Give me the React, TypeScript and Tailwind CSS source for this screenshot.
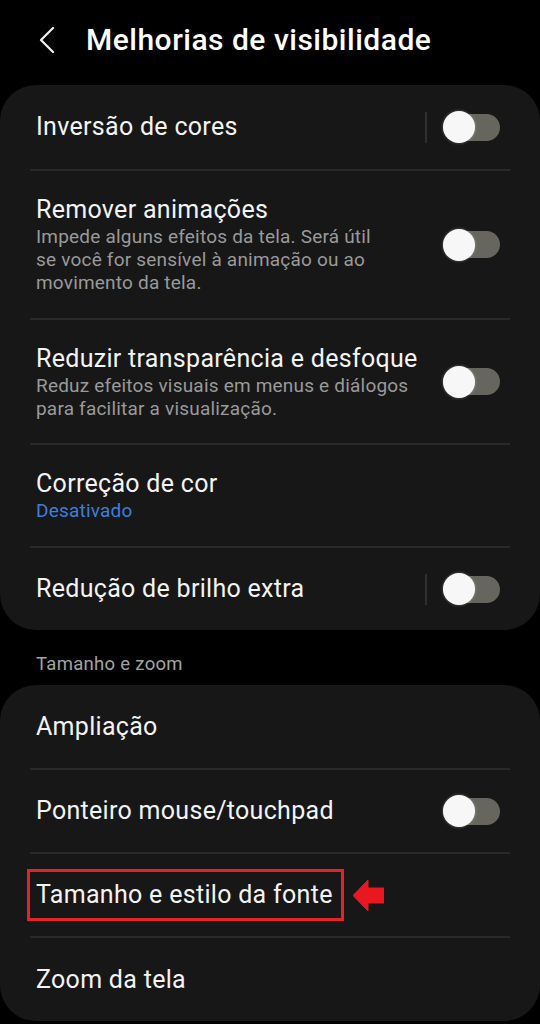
import { ReactNode } from "react";

function Toggle({ divider = false }: { divider?: boolean }) {
  return (
    <div className="flex items-center shrink-0">
      {divider && <div className="w-[2px] h-[31px] bg-[#2f2f2f] mr-[16px]" />}
      <div className="relative w-[57px] h-[27px] rounded-full bg-[#66665f]">
        <div className="absolute left-0 top-1/2 -translate-y-1/2 w-[32px] h-[32px] rounded-full bg-[#f7f7f7] shadow-[0_0_3px_rgba(255,255,255,0.35)]" />
      </div>
    </div>
  );
}

function Row({
  title,
  sub,
  subColor = "text-[#9a9a9a]",
  subWidth = "max-w-[380px]",
  height,
  right,
}: {
  title: ReactNode;
  sub?: string;
  subColor?: string;
  subWidth?: string;
  height: string;
  right?: ReactNode;
}) {
  return (
    <div className={`flex items-center justify-between pl-[36px] pr-[40px] ${height}`}>
      <div className="flex flex-col">
        <div className="text-[25px] leading-[30px] tracking-[0.3px] text-[#f3f3f3]">{title}</div>
        {sub && <div className={`text-[19px] leading-[23px] tracking-[0.2px] ${subColor} ${subWidth}`}>{sub}</div>}
      </div>
      {right}
    </div>
  );
}

const Divider = () => <div className="mx-[30px] h-[2px] bg-[#2a2a2a]" />;

export default function App() {
  return (
    <div className="w-[540px] h-[1024px] bg-black overflow-hidden" style={{ fontFamily: "Roboto, 'Noto Sans', sans-serif" }}>
      <header className="h-[85px] flex items-center pl-[39px]">
        <svg width="16" height="26" viewBox="0 0 16 26" className="mt-[-6px]">
          <path d="M14 1 L2 13 L14 25" fill="none" stroke="#f2f2f2" strokeWidth="2.2" strokeLinecap="round" strokeLinejoin="round" />
        </svg>
        <h1 className="ml-[31px] mt-[-7px] text-[30px] font-medium text-white tracking-[0.5px]">Melhorias de visibilidade</h1>
      </header>

      <section className="bg-[#171717] rounded-[36px]">
        <Row title="Inversão de cores" height="h-[84px]" right={<Toggle divider />} />
        <Divider />
        <Row
          title="Remover animações"
          sub="Impede alguns efeitos da tela. Será útil se você for sensível à animação ou ao movimento da tela."
          subWidth="max-w-[350px]"
          height="h-[147px]"
          right={<Toggle />}
        />
        <Divider />
        <Row
          title="Reduzir transparência e desfoque"
          sub="Reduz efeitos visuais em menus e diálogos para facilitar a visualização."
          subWidth="max-w-[385px]"
          height="h-[123px]"
          right={<Toggle />}
        />
        <Divider />
        <Row title="Correção de cor" sub="Desativado" subColor="text-[#3d7fdc]" height="h-[101px]" />
        <Divider />
        <Row title="Redução de brilho extra" height="h-[82px]" right={<Toggle divider />} />
      </section>

      <div className="h-[55px] flex items-end pb-[10px] pl-[36px]">
        <span className="text-[18.5px] leading-[22px] tracking-[0.3px] text-[#a3a3a3]">Tamanho e zoom</span>
      </div>

      <section className="bg-[#171717] rounded-[36px]">
        <Row title="Ampliação" height="h-[83px]" />
        <Divider />
        <Row title="Ponteiro mouse/touchpad" height="h-[82px]" right={<Toggle />} />
        <Divider />
        <div className="h-[82px] flex items-center pl-[27px]">
          <span className="border-[3px] border-[#e2232a] pl-[6px] pr-[8px] py-[8px] text-[25px] leading-[30px] tracking-[0.3px] text-[#f3f3f3]">
            Tamanho e estilo da fonte
          </span>
          <svg width="31" height="31" viewBox="0 0 31 31" className="ml-[9px]">
            <polygon points="0,15.5 15,0 15,8 31,8 31,23 15,23 15,31" fill="#ea1620" strokeLinejoin="round" stroke="#ea1620" strokeWidth="1" />
          </svg>
        </div>
        <Divider />
        <Row title="Zoom da tela" height="h-[83px]" />
      </section>
    </div>
  );
}
